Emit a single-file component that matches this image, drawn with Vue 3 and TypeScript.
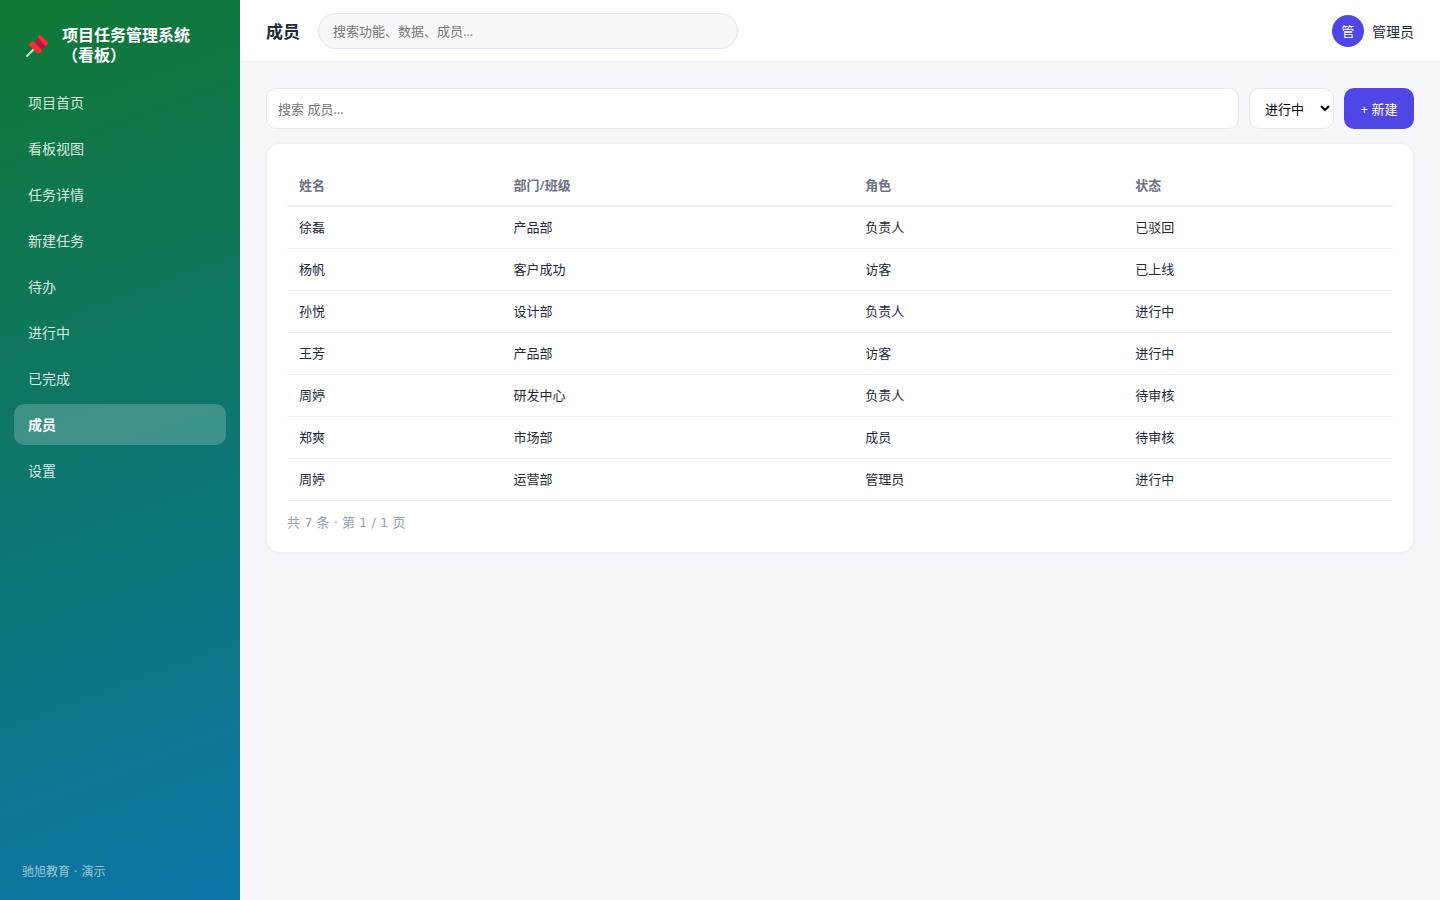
<script setup lang="ts">
import { ref, computed } from 'vue'

interface Member {
  name: string
  dept: string
  role: string
  status: string
}

const navItems: string[] = ['项目首页', '看板视图', '任务详情', '新建任务', '待办', '进行中', '已完成', '成员', '设置']
const active = ref('成员')
const globalQuery = ref('')
const query = ref('')
const status = ref('进行中')
const statuses: string[] = ['进行中', '待审核', '已上线', '已驳回']

const members: Member[] = [
  { name: '徐磊', dept: '产品部', role: '负责人', status: '已驳回' },
  { name: '杨帆', dept: '客户成功', role: '访客', status: '已上线' },
  { name: '孙悦', dept: '设计部', role: '负责人', status: '进行中' },
  { name: '王芳', dept: '产品部', role: '访客', status: '进行中' },
  { name: '周婷', dept: '研发中心', role: '负责人', status: '待审核' },
  { name: '郑爽', dept: '市场部', role: '成员', status: '待审核' },
  { name: '周婷', dept: '运营部', role: '管理员', status: '进行中' },
]

const rows = computed(() => members.filter((m) => Object.values(m).join(' ').includes(query.value)))
</script>

<template>
  <div class="layout">
    <aside class="sidebar">
      <div class="brand">
        <svg class="pin" viewBox="-1 -2 26 26" aria-hidden="true">
          <path d="M9 15 2 22" stroke="#d9dde0" stroke-width="2" stroke-linecap="round" />
          <path d="m10 8 6-5 6 6-5 7z" fill="#c70a4b" />
          <path d="m12.500 3 2.500-2.500 8.500 8.500-2 2.500h-2z" fill="#ff2f2f" />
          <path d="M3.500 10.500 6.500 7.500 9 8 16 15 16.500 17.500 14.500 19.500 12 19z" fill="#ff2f2f" />
        </svg>
        <div class="brand-name">项目任务管理系统<br />（看板）</div>
      </div>
      <nav class="nav">
        <a
          v-for="item in navItems"
          :key="item"
          href="#"
          class="nav-item"
          :class="{ active: item === active }"
          @click.prevent="active = item"
          >{{ item }}</a
        >
      </nav>
      <div class="copyright">驰旭教育 · 演示</div>
    </aside>

    <div class="main">
      <header class="topbar">
        <h1 class="title">成员</h1>
        <input v-model="globalQuery" class="global-search" type="text" aria-label="全局搜索" placeholder="搜索功能、数据、成员…" />
        <div class="user">
          <span class="avatar">管</span>
          <span class="user-name">管理员</span>
        </div>
      </header>

      <main class="content">
        <div class="toolbar">
          <input v-model="query" class="search" type="text" aria-label="搜索成员" placeholder="搜索 成员..." />
          <select v-model="status" class="filter" aria-label="状态">
            <option v-for="s in statuses" :key="s">{{ s }}</option>
          </select>
          <button class="create" type="button">+ 新建</button>
        </div>

        <section class="card">
          <table class="table">
            <thead>
              <tr>
                <th class="col-name">姓名</th>
                <th class="col-dept">部门/班级</th>
                <th class="col-role">角色</th>
                <th>状态</th>
              </tr>
            </thead>
            <tbody>
              <tr v-for="(m, i) in rows" :key="i">
                <td>{{ m.name }}</td>
                <td>{{ m.dept }}</td>
                <td>{{ m.role }}</td>
                <td>{{ m.status }}</td>
              </tr>
            </tbody>
          </table>
          <div class="pager">共 {{ rows.length }} 条 · 第 1 / 1 页</div>
        </section>
      </main>
    </div>
  </div>
</template>

<style>
body {
  margin: 0;
  background: #f5f7fb;
}
</style>

<style scoped>
.layout {
  display: flex;
  min-height: 100vh;
  color: #1e293b;
  font-family: 'Open Sans', 'Noto Sans CJK SC', sans-serif;
  font-size: 14px;
}
.layout * {
  box-sizing: border-box;
}
.sidebar {
  display: flex;
  flex-direction: column;
  flex: 0 0 240px;
  padding: 25px 14px 19px;
  background: linear-gradient(160deg, #107833, #0b75a8);
  color: #fff;
}
.brand {
  display: flex;
  align-items: center;
  gap: 12px;
  padding: 0 10px;
}
.pin {
  flex: none;
  width: 26px;
  height: 26px;
  fill: none;
}
.brand-name {
  font-size: 16px;
  font-weight: 600;
  line-height: 20px;
}
.nav {
  display: flex;
  flex-direction: column;
  gap: 5px;
  margin-top: 17px;
}
.nav-item {
  padding: 0 14px;
  border-radius: 10px;
  color: rgba(255, 255, 255, 0.85);
  line-height: 41px;
  text-decoration: none;
}
.nav-item.active {
  background: rgba(255, 255, 255, 0.2);
  color: #fff;
  font-weight: 700;
}
.copyright {
  margin-top: auto;
  padding: 0 8px;
  color: rgba(255, 255, 255, 0.6);
  font-family: 'DejaVu Sans', 'Noto Sans CJK SC', sans-serif;
  font-size: 12px;
  line-height: 18px;
}
.main {
  flex: 1;
  min-width: 0;
}
.topbar {
  display: flex;
  align-items: center;
  gap: 18px;
  height: 62px;
  padding: 0 26px;
  border-bottom: 1px solid #eceef4;
  background: #fff;
}
.title {
  margin: 0;
  font-size: 17px;
  font-weight: 700;
}
.global-search {
  width: 420px;
  height: 36px;
  padding: 0 14px;
  border: 1px solid #e5e7f0;
  border-radius: 18px;
  background: #f7f8fc;
  font: inherit;
  font-size: 13px;
}
.global-search::placeholder,
.search::placeholder {
  color: #757575;
}
.user {
  display: flex;
  align-items: center;
  gap: 8px;
  margin-left: auto;
}
.avatar {
  width: 32px;
  border-radius: 50%;
  background: #4f46e5;
  color: #fff;
  font-size: 13px;
  line-height: 32px;
  text-align: center;
}
.content {
  padding: 26px;
}
.toolbar {
  display: flex;
  gap: 10px;
  height: 41px;
}
.search,
.filter,
.create {
  border-radius: 10px;
  font: inherit;
  font-size: 13px;
}
.search {
  flex: 1;
  min-width: 0;
  padding: 0 11px;
  border: 1px solid #e5e7f0;
  background: #fff;
}
.filter {
  width: 85px;
  padding: 0 0 0 11px;
  border: 1px solid #e5e7f0;
  background: #fff;
  color: #000;
}
.create {
  width: 70px;
  padding: 0;
  border: 0;
  background: #4f46e5;
  color: #fff;
}
.card {
  margin-top: 14px;
  padding: 20px;
  border: 1px solid #eef0f6;
  border-radius: 14px;
  background: #fff;
  box-shadow: 0 1px 4px rgba(30, 41, 59, 0.04);
}
.table {
  width: 100%;
  border-collapse: separate;
  border-spacing: 0;
  font-size: 13px;
}
.table th,
.table td {
  padding: 11px 12px;
  line-height: 19px;
  text-align: left;
}
.table th {
  padding: 12px 12px 10px;
  border-bottom: 2px solid #eef0f4;
  color: #6b7280;
  font-weight: 600;
}
.table td {
  border-bottom: 1px solid #eef0f4;
}
.col-name {
  width: 19.4%;
}
.col-dept {
  width: 31.8%;
}
.col-role {
  width: 24.4%;
}
.pager {
  margin-top: 13px;
  color: #94a3b8;
  font-family: 'DejaVu Sans', 'Noto Sans CJK SC', sans-serif;
  font-size: 13px;
  line-height: 18px;
}
</style>
